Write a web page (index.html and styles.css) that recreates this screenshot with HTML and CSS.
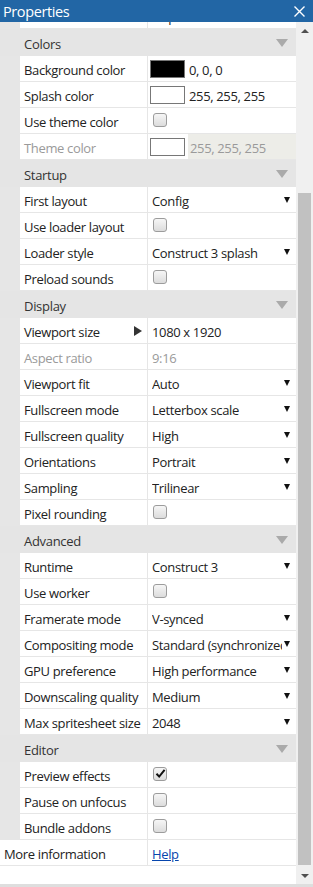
FILE: index.html
```html
<!DOCTYPE html>
<html lang="en">
<head>
    <meta charset="UTF-8">
    <meta name="viewport" content="width=device-width, initial-scale=1.0">
    <title>Properties</title>
    <link rel="stylesheet" href="styles.css">
</head>
<body>
    <div class="panel">
        <header class="titlebar">
            <span class="title">Properties</span>
            <svg class="close" width="11" height="11" viewBox="0 0 11 11">
                <path d="M0.5 0.5 L10.5 10.5 M10.5 0.5 L0.5 10.5" stroke="#fff" stroke-width="1.4" fill="none"/>
            </svg>
        </header>

        <div class="panel-body">
            <div class="list">
                <div class="list-inner">
                    <div class="group">
                        <div class="group-body">
                            <div class="row">
                                <div class="name">Website</div>
                                <div class="value">http://</div>
                            </div>
                        </div>
                    </div>

                    <div class="group">
                        <div class="group-head">Colors <span class="caret"></span></div>
                        <div class="group-body">
                            <div class="row">
                                <div class="name">Background color</div>
                                <div class="value color"><span class="swatch black"></span><span>0, 0, 0</span></div>
                            </div>
                            <div class="row">
                                <div class="name">Splash color</div>
                                <div class="value color"><span class="swatch"></span><span>255, 255, 255</span></div>
                            </div>
                            <div class="row">
                                <div class="name">Use theme color</div>
                                <div class="value"><span class="check"></span></div>
                            </div>
                            <div class="row disabled">
                                <div class="name">Theme color</div>
                                <div class="value color"><span class="swatch"></span><span class="field">255, 255, 255</span></div>
                            </div>
                        </div>
                    </div>

                    <div class="group">
                        <div class="group-head">Startup <span class="caret"></span></div>
                        <div class="group-body">
                            <div class="row">
                                <div class="name">First layout</div>
                                <div class="value select"><span class="text">Config</span><span class="drop"></span></div>
                            </div>
                            <div class="row">
                                <div class="name">Use loader layout</div>
                                <div class="value"><span class="check"></span></div>
                            </div>
                            <div class="row">
                                <div class="name">Loader style</div>
                                <div class="value select"><span class="text">Construct 3 splash</span><span class="drop"></span></div>
                            </div>
                            <div class="row">
                                <div class="name">Preload sounds</div>
                                <div class="value"><span class="check"></span></div>
                            </div>
                        </div>
                    </div>

                    <div class="group">
                        <div class="group-head">Display <span class="caret"></span></div>
                        <div class="group-body">
                            <div class="row">
                                <div class="name expand">Viewport size <span class="arrow"></span></div>
                                <div class="value">1080 x 1920</div>
                            </div>
                            <div class="row disabled">
                                <div class="name">Aspect ratio</div>
                                <div class="value">9:16</div>
                            </div>
                            <div class="row">
                                <div class="name">Viewport fit</div>
                                <div class="value select"><span class="text">Auto</span><span class="drop"></span></div>
                            </div>
                            <div class="row">
                                <div class="name">Fullscreen mode</div>
                                <div class="value select"><span class="text">Letterbox scale</span><span class="drop"></span></div>
                            </div>
                            <div class="row">
                                <div class="name">Fullscreen quality</div>
                                <div class="value select"><span class="text">High</span><span class="drop"></span></div>
                            </div>
                            <div class="row">
                                <div class="name">Orientations</div>
                                <div class="value select"><span class="text">Portrait</span><span class="drop"></span></div>
                            </div>
                            <div class="row">
                                <div class="name">Sampling</div>
                                <div class="value select"><span class="text">Trilinear</span><span class="drop"></span></div>
                            </div>
                            <div class="row">
                                <div class="name">Pixel rounding</div>
                                <div class="value"><span class="check"></span></div>
                            </div>
                        </div>
                    </div>

                    <div class="group">
                        <div class="group-head">Advanced <span class="caret"></span></div>
                        <div class="group-body">
                            <div class="row">
                                <div class="name">Runtime</div>
                                <div class="value select"><span class="text">Construct 3</span><span class="drop"></span></div>
                            </div>
                            <div class="row">
                                <div class="name">Use worker</div>
                                <div class="value"><span class="check"></span></div>
                            </div>
                            <div class="row">
                                <div class="name">Framerate mode</div>
                                <div class="value select"><span class="text">V-synced</span><span class="drop"></span></div>
                            </div>
                            <div class="row">
                                <div class="name">Compositing mode</div>
                                <div class="value select"><span class="text">Standard (synchronized)</span><span class="drop"></span></div>
                            </div>
                            <div class="row">
                                <div class="name">GPU preference</div>
                                <div class="value select"><span class="text">High performance</span><span class="drop"></span></div>
                            </div>
                            <div class="row">
                                <div class="name">Downscaling quality</div>
                                <div class="value select"><span class="text">Medium</span><span class="drop"></span></div>
                            </div>
                            <div class="row">
                                <div class="name">Max spritesheet size</div>
                                <div class="value select"><span class="text">2048</span><span class="drop"></span></div>
                            </div>
                        </div>
                    </div>

                    <div class="group">
                        <div class="group-head">Editor <span class="caret"></span></div>
                        <div class="group-body">
                            <div class="row">
                                <div class="name">Preview effects</div>
                                <div class="value">
                                    <span class="check on">
                                        <svg width="11" height="11" viewBox="0 0 11 11"><path d="M1.5 5.8 L4.2 8.6 L9.6 1.8" stroke="#111" stroke-width="2" fill="none"/></svg>
                                    </span>
                                </div>
                            </div>
                            <div class="row">
                                <div class="name">Pause on unfocus</div>
                                <div class="value"><span class="check"></span></div>
                            </div>
                            <div class="row">
                                <div class="name">Bundle addons</div>
                                <div class="value"><span class="check"></span></div>
                            </div>
                        </div>
                    </div>

                    <div class="row top">
                        <div class="name">More information</div>
                        <div class="value"><a href="#">Help</a></div>
                    </div>
                </div>
            </div>

            <div class="scrollbar">
                <div class="sb-btn"><span class="sb-up"></span></div>
                <div class="sb-track"><div class="sb-thumb"></div></div>
                <div class="sb-btn"><span class="sb-down"></span></div>
            </div>
        </div>
        <div class="footer"></div>
    </div>
</body>
</html>
```

FILE: styles.css
```css
body {
    margin: 0;
    padding: 0;
    font-family: "Open Sans", "Noto Sans", sans-serif;
    font-size: 13px;
    color: #222;
    background: #fff;
}
.panel {
    width: 313px;
    height: 887px;
    display: flex;
    flex-direction: column;
    overflow: hidden;
}

/* title bar */
.titlebar {
    height: 22px;
    flex: none;
    background-color: #2266a5;
    color: #fff;
    display: flex;
    align-items: center;
    justify-content: space-between;
    padding: 0 8px 0 3px;
}
.title {
    font-size: 14.5px;
    letter-spacing: -0.4px;
    padding-top: 1px;
}
.close {
    display: block;
}

/* list + scrollbar */
.panel-body {
    height: 862px;
    flex: none;
    display: flex;
}
.list {
    flex: 1;
    overflow: hidden;
    background: #fff;
}
.list-inner {
    margin-top: -19px;
}
.group-head {
    height: 27px;
    box-sizing: border-box;
    background: #e5e5e5;
    padding: 2px 8px 0 24px;
    display: flex;
    align-items: center;
    justify-content: space-between;
    color: #333;
    letter-spacing: -0.3px;
}
.caret {
    width: 0;
    height: 0;
    margin-top: -2px;
    border-left: 6px solid transparent;
    border-right: 6px solid transparent;
    border-top: 8px solid #aaa;
}
.group-body {
    background: #e6e6e6;
    padding-left: 20px;
}

.row {
    display: grid;
    grid-template-columns: 128px 1fr;
    height: 26px;
    box-sizing: border-box;
    border-bottom: 1px solid #e6e6e6;
    background: #fff;
    letter-spacing: -0.35px;
}
.row.top {
    grid-template-columns: 148px 1fr;
}
.name {
    padding: 2px 0 0 4px;
    border-right: 1px solid #e6e6e6;
    display: flex;
    align-items: center;
    white-space: nowrap;
    overflow: hidden;
}
.value {
    padding: 2px 0 0 4px;
    display: flex;
    align-items: center;
    white-space: nowrap;
    overflow: hidden;
}
.disabled .name,
.disabled .value {
    color: #9a9a9a;
}
.value a {
    color: #0645ad;
    text-decoration: underline;
}

/* select style values */
.value.select {
    padding-right: 6px;
}
.value.select .text {
    flex: 1;
    overflow: hidden;
}
.drop {
    flex: none;
    width: 0;
    height: 0;
    margin: -2px 0 0 2px;
    border-left: 3px solid transparent;
    border-right: 3px solid transparent;
    border-top: 6px solid #111;
}

/* color values */
.value.color {
    padding: 0 0 0 2px;
    gap: 4px;
}
.value.color > span:last-child {
    padding-top: 2px;
}
.swatch {
    width: 33px;
    height: 16px;
    border: 1px solid #777;
    background: #fff;
}
.swatch.black {
    background: #000;
}
.field {
    align-self: stretch;
    flex: 1;
    margin-left: -1px;
    padding-left: 2px;
    display: flex;
    align-items: center;
    background: #ededE8;
}

/* checkboxes */
.check {
    width: 12px;
    height: 12px;
    margin: -4px 0 0 1px;
    border: 1px solid #9c9c9c;
    border-radius: 3px;
    background: linear-gradient(#f6f6f6, #dcdcdc);
    display: flex;
    align-items: center;
    justify-content: center;
}

/* expandable name */
.name.expand {
    justify-content: space-between;
    padding-right: 5px;
}
.arrow {
    width: 0;
    height: 0;
    margin-top: -2px;
    border-top: 5px solid transparent;
    border-bottom: 5px solid transparent;
    border-left: 8px solid #333;
}

/* scrollbar */
.scrollbar {
    width: 17px;
    flex: none;
    background: #f0f0f0;
    display: flex;
    flex-direction: column;
}
.sb-btn {
    height: 17px;
    display: flex;
    align-items: center;
    justify-content: center;
}
.sb-up {
    border-left: 4px solid transparent;
    border-right: 4px solid transparent;
    border-bottom: 4px solid #505050;
}
.sb-down {
    border-left: 4px solid transparent;
    border-right: 4px solid transparent;
    border-top: 4px solid #505050;
}
.sb-track {
    flex: 1;
    padding: 154px 2px 2px 2px;
    display: flex;
}
.sb-thumb {
    flex: 1;
    background: #c1c1c1;
}

.footer {
    flex: 1;
    background: #dedede;
}
```
